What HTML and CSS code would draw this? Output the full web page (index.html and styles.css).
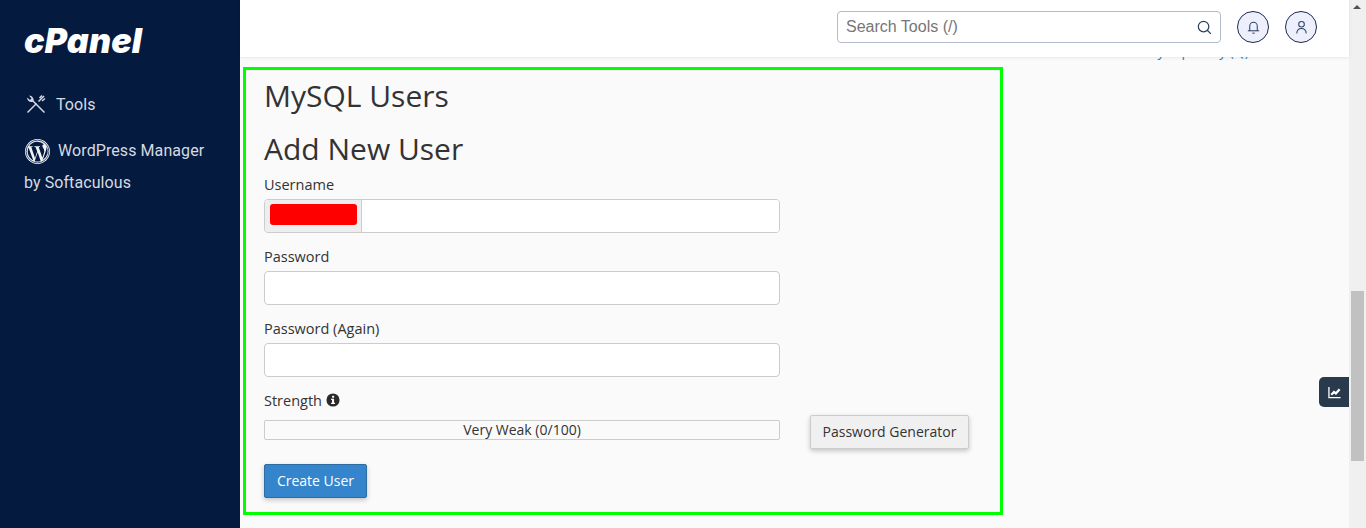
FILE: index.html
```html
<!DOCTYPE html>
<html lang="en">
<head>
    <meta charset="UTF-8">
    <meta name="viewport" content="width=device-width, initial-scale=1.0">
    <title>MySQL Users - cPanel</title>
    <link rel="stylesheet" href="styles.css">
</head>
<body>
    <div class="app">
        <aside class="sidebar">
            <div class="logo">cPanel</div>
            <nav class="side-nav">
                <a class="side-link side-tools">
                    <svg class="tools-icon" viewBox="0 0 24 24" width="24" height="24" fill="none" stroke="#d5dae2" stroke-width="1.500">
                        <path d="M3.500 20.500 L12.500 11.500"/>
                        <path d="M14.500 9.500 L20 4 M15.500 6 L18 3.500 M18 9 L21 6.500"/>
                        <path d="M20.500 20.500 L9 9"/>
                        <path d="M9.500 9.500 C10.500 6.500 8 3.500 5 3.500 L7.500 6.500 L6 8 L3 5.500 C3 9 6.500 11 9.500 9.500Z" fill="#d5dae2" stroke="none"/>
                    </svg>
                    <span>Tools</span>
                </a>
                <a class="side-link side-wp">
                    <svg class="wp-icon" viewBox="0 0 24 24" width="25" height="25">
                        <circle cx="12" cy="12" r="12" fill="#f1f3f6"/>
                        <circle cx="12" cy="12" r="10.900" fill="none" stroke="#051a3f" stroke-width=".7"/>
                        <path fill="#051a3f" d="M2.600 12c0 3.700 2.200 6.900 5.300 8.500L3.400 8.200A9.400 9.400 0 0 0 2.600 12zm15.800-.5c0-1.200-.4-2-.8-2.600-.5-.8-.9-1.400-.9-2.200 0-.8.6-1.600 1.500-1.600h.1A9.400 9.400 0 0 0 4 7h.6c1 0 2.500-.1 2.500-.1.500 0 .6.700.1.800 0 0-.5.100-1.100.1l3.500 10.400 2.100-6.300-1.500-4.100c-.5 0-1-.1-1-.1-.5 0-.5-.8 0-.8 0 0 1.600.1 2.500.1 1 0 2.500-.1 2.500-.1.500 0 .6.700.1.800 0 0-.5.100-1.100.1l3.500 10.300 1-3.200c.4-1.300.8-2.300.8-3.100zm-6.200 1.300-2.900 8.500a9.400 9.400 0 0 0 5.800-.2l-.1-.1-2.800-8.200zm8.300-5.500.1 1c0 1-.2 2.100-.7 3.400l-2.900 8.400a9.400 9.400 0 0 0 3.500-12.800z"/>
                    </svg>
                    <span class="wp-title">WordPress Manager</span>
                    <span class="wp-sub">by Softaculous</span>
                </a>
            </nav>
        </aside>

        <div class="main">
            <header class="topbar">
                <div class="search-box">
                    <input class="search-input" type="text" placeholder="Search Tools (/)">
                    <svg viewBox="0 0 16 16" width="15" height="15" fill="none" stroke="#2b3f63" stroke-width="1.300">
                        <circle cx="7" cy="7" r="5.600"/>
                        <path d="M11.200 11.200 L14.800 14.800"/>
                    </svg>
                </div>
                <button class="round-btn" type="button" aria-label="Notifications">
                    <svg viewBox="0 0 16 16" width="15" height="15" fill="none" stroke="#2b3f63" stroke-width="1.100">
                        <path d="M4 11.500 V6.500 a4 4 0 0 1 8 0 V11.500"/>
                        <path d="M2 11.500 H14"/>
                        <path d="M6.800 14 H9.200"/>
                    </svg>
                </button>
                <button class="round-btn" type="button" aria-label="Account">
                    <svg viewBox="0 0 16 16" width="15" height="15" fill="none" stroke="#2b3f63" stroke-width="1.100">
                        <circle cx="8" cy="4.500" r="3"/>
                        <path d="M3 14.500 C3 10.500 5.500 9 8 9 C10.500 9 13 10.500 13 14.500"/>
                    </svg>
                </button>
            </header>
            <a class="hidden-link">by topic key (Q)</a>

            <main class="content">
                <section class="highlight-box">
                    <h1 class="page-title">MySQL Users</h1>
                    <h2 class="section-title">Add New User</h2>
                    <form class="user-form">
                        <div class="form-group">
                            <label class="form-label" for="username">Username</label>
                            <div class="input-prefixed">
                                <span class="prefix"><span class="redacted"></span></span>
                                <input class="prefixed-field" id="username" type="text">
                            </div>
                        </div>
                        <div class="form-group">
                            <label class="form-label" for="password">Password</label>
                            <input class="input-field" id="password" type="password">
                        </div>
                        <div class="form-group">
                            <label class="form-label" for="passwordAgain">Password (Again)</label>
                            <input class="input-field" id="passwordAgain" type="password">
                        </div>
                        <div class="strength-group">
                            <div class="form-label">Strength
                                <svg class="info-icon" viewBox="0 0 16 16" width="14" height="14">
                                    <circle cx="8" cy="8" r="7.500" fill="#2b2b2b"/>
                                    <rect x="6.900" y="3" width="2.400" height="2.300" rx=".5" fill="#fff"/>
                                    <path d="M5.800 6.500 H9.200 V11 H10.300 V12.600 H5.800 V11 H6.900 V8.100 H5.800Z" fill="#fff"/>
                                </svg>
                            </div>
                            <div class="strength-row">
                                <div class="strength-bar">Very Weak (0/100)</div>
                                <button class="btn btn-default" type="button">Password Generator</button>
                            </div>
                        </div>
                        <button class="btn btn-primary" type="button">Create User</button>
                    </form>
                </section>
            </main>

            <button class="stats-tab" type="button" aria-label="Statistics">
                <svg viewBox="0 0 14 14" width="13" height="13" fill="none" stroke="#fff">
                    <path d="M1 1 V12.500 H13.500" stroke-width="1.400"/>
                    <path d="M3.500 9.500 L6.500 6.500 L8.500 8 L12.500 3.500" stroke-width="2.400"/>
                </svg>
            </button>
        </div>

        <div class="scrollbar">
            <span class="scroll-arrow"></span>
            <span class="scroll-thumb"></span>
        </div>
    </div>
</body>
</html>
```

FILE: styles.css
```css
* {
    margin: 0;
    padding: 0;
    box-sizing: border-box;
}

html,
body {
    height: 528px;
    overflow: hidden;
}

body {
    font-family: "Open Sans", sans-serif;
    background: #fafafa;
    color: #333;
}

.app {
    display: flex;
    height: 528px;
}

/* sidebar */
.sidebar {
    width: 240px;
    flex-shrink: 0;
    background: #051a3f;
    color: #d5dae2;
    font-family: Roboto, sans-serif;
    padding: 23px 0 0 24px;
}

.logo {
    font-family: Inter, sans-serif;
    font-size: 34px;
    line-height: 36px;
    font-weight: 900;
    font-style: italic;
    letter-spacing: 0.2px;
    color: #fff;
}

.side-nav {
    margin-top: 29px;
}

.side-link {
    display: block;
    font-size: 16px;
    letter-spacing: 0.08px;
}

.side-tools {
    display: flex;
    align-items: center;
    gap: 8px;
    height: 32px;
}

.side-wp {
    margin-top: 15px;
    line-height: 32px;
}

.wp-icon {
    vertical-align: middle;
    margin: 0 4px 0 1px;
}

.wp-sub {
    display: block;
}

/* top bar */
.main {
    flex: 1;
    position: relative;
    min-width: 0;
}

.topbar {
    position: relative;
    z-index: 2;
    height: 57px;
    background: #fff;
    box-shadow: 0 1px 3px rgba(0, 0, 0, 0.08);
    display: flex;
    justify-content: flex-end;
    align-items: center;
    gap: 16px;
    padding: 0 32px 3px 0;
}

.search-box {
    width: 384px;
    height: 32px;
    border: 1px solid #b3bccd;
    border-radius: 4px;
    background: #fff;
    display: flex;
    align-items: center;
    padding: 0 8px;
}

.search-input {
    flex: 1;
    border: none;
    outline: none;
    background: none;
    font-family: "Liberation Sans", sans-serif;
    font-size: 16px;
    min-width: 0;
}

.search-input::placeholder {
    color: #767676;
}

.round-btn {
    width: 32px;
    height: 32px;
    border-radius: 50%;
    border: 1px solid #1b2a4e;
    background: #edf0fc;
    display: flex;
    align-items: center;
    justify-content: center;
}

.hidden-link {
    position: absolute;
    z-index: 1;
    top: 41px;
    right: 100px;
    font-size: 14px;
    line-height: 19px;
    color: #2f80c6;
}

/* page content */
.content {
    padding: 10px 0 0 3px;
}

.highlight-box {
    width: 760px;
    height: 448px;
    border: 3px solid #00ff00;
    padding: 8px 18px 0;
}

.page-title,
.section-title {
    font-size: 30px;
    line-height: 36px;
    font-weight: 400;
    color: #333;
}

.section-title {
    margin-top: 17px;
}

.user-form {
    margin-top: 8px;
}

.form-group {
    height: 72px;
}

.form-label {
    display: block;
    font-size: 14.500px;
    line-height: 20px;
    font-weight: 500;
    color: #333;
    margin-bottom: 4px;
}

.input-field,
.input-prefixed {
    display: block;
    width: 516px;
    height: 34px;
    border: 1px solid #ccc;
    border-radius: 4px;
    background: #fff;
}

.input-prefixed {
    display: flex;
    overflow: hidden;
}

.prefix {
    width: 97px;
    background: #eee;
    border-right: 1px solid #ccc;
    padding: 4px 0 0 5px;
}

.redacted {
    display: block;
    width: 87px;
    height: 21px;
    background: #ff0000;
    border-radius: 3px;
}

.prefixed-field {
    flex: 1;
    border: none;
    outline: none;
    min-width: 0;
}

.strength-group {
    height: 73px;
}

.info-icon {
    vertical-align: -1px;
}

.strength-row {
    display: flex;
    align-items: flex-start;
    gap: 30px;
}

.strength-bar {
    width: 516px;
    height: 20px;
    margin-top: 5px;
    border: 1px solid #ccc;
    border-radius: 2px;
    background: #fafafa;
    text-align: center;
    font-size: 14px;
    line-height: 18px;
}

.btn {
    height: 34px;
    border-radius: 2px;
    font-family: inherit;
    font-size: 14px;
    padding-bottom: 2px;
    cursor: pointer;
}

.btn-default {
    width: 159px;
    border: 1px solid #ccc;
    background: #f0f0f0;
    color: #333;
    box-shadow: 0 2px 5px rgba(0, 0, 0, 0.22);
}

.btn-primary {
    display: block;
    width: 103px;
    border: 1px solid #2e6da4;
    background: #3585cd;
    color: #fff;
    box-shadow: 0 2px 5px rgba(0, 0, 0, 0.22);
}

/* floating stats tab */
.stats-tab {
    position: absolute;
    top: 377px;
    right: 0;
    width: 30px;
    height: 30px;
    border: none;
    border-radius: 5px 0 0 5px;
    background: #293a4d;
    display: flex;
    align-items: center;
    justify-content: center;
}

/* fake scrollbar */
.scrollbar {
    width: 17px;
    flex-shrink: 0;
    background: #f0f0f0;
    position: relative;
}

.scroll-arrow {
    position: absolute;
    top: 5px;
    left: 4px;
    border-left: 4px solid transparent;
    border-right: 4px solid transparent;
    border-bottom: 4px solid #505050;
}

.scroll-thumb {
    position: absolute;
    top: 291px;
    left: 2px;
    width: 13px;
    height: 170px;
    background: #c1c1c1;
}
```
